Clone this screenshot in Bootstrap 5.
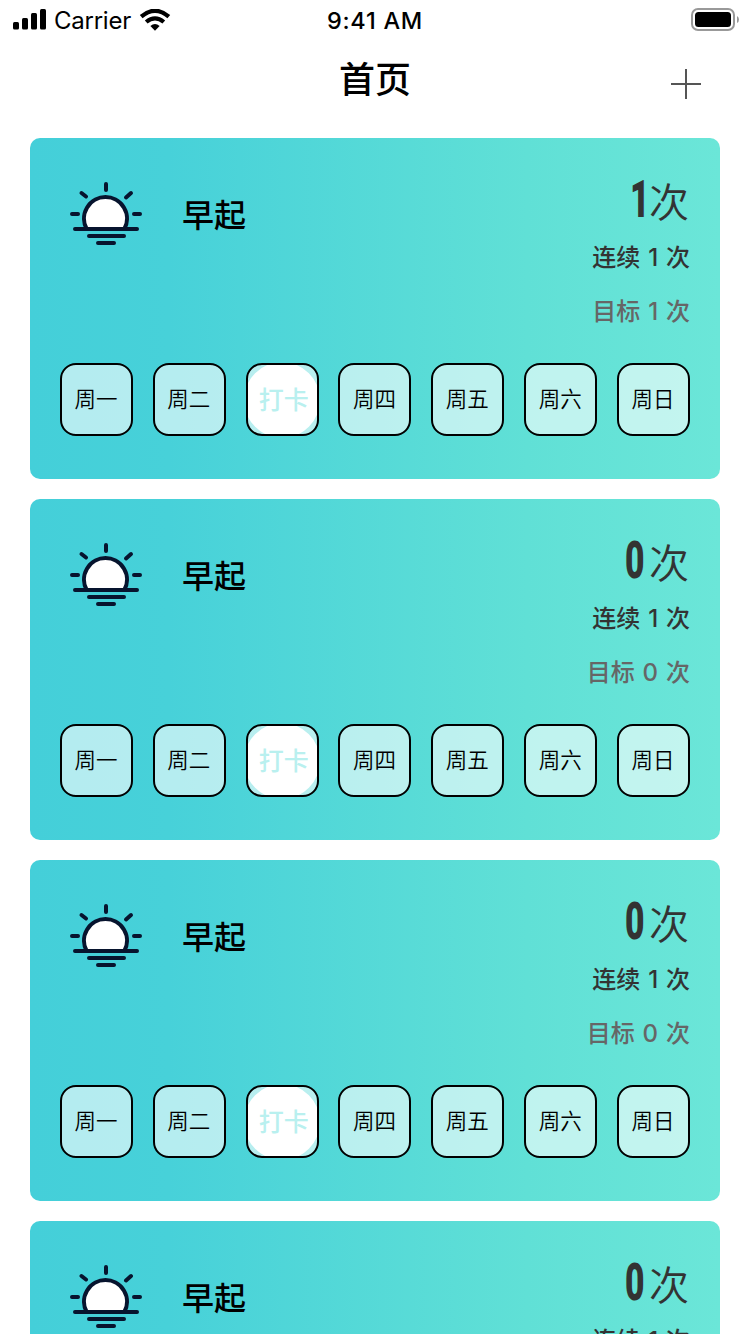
<!DOCTYPE html>
<html lang="zh-CN">
<head>
<meta charset="utf-8">
<meta name="viewport" content="width=device-width, initial-scale=1">
<title>首页</title>
<link href="https://cdn.jsdelivr.net/npm/bootstrap@5.3.0/dist/css/bootstrap.min.css" rel="stylesheet">
<style>
body{font-family:Inter,"Noto Sans CJK SC",sans-serif;color:#000;background:#fff;height:1334px;overflow:hidden}
.status-bar{height:40px;font-size:24px;line-height:42px}
.status-side{flex:1 1 0}
.signal{margin-left:13px}
.carrier{margin:2px 0 0 7px;font-size:24px;letter-spacing:-.25px}
.clock{font-weight:500;font-size:23.5px;letter-spacing:.75px}
.title-bar{height:98px}
.page-title{font-size:36px;font-weight:500;line-height:80px}
.add-btn{margin-top:29px;margin-right:49px}
#habits{gap:20px;padding:0 30px}
.habit{flex:none;height:341px;border-radius:10px;padding:36px 30px 43px;background:linear-gradient(90deg,#44cfd9 0%,#47d1d9 20%,#60e0d6 72%,#6be6d8 100%)}
.sun{margin:8px 0 0 10px}
.habit-name{font-size:32px;font-weight:500;line-height:48px;margin:18px 0 0 40px}
.stats{color:#333;font-size:24px;font-weight:500;line-height:54px;text-align:right;word-spacing:1.5px}
.total{height:57px;line-height:54px;font-size:40px;font-weight:350;padding-right:1px}
.digit{display:inline-block;font-family:Roboto,sans-serif;font-size:51px;font-weight:900;line-height:1;transform:scaleX(.66);transform-origin:100% 50%;margin-right:4px}
.digit-1{margin-right:-1px}
.goal{color:#666}
.day{width:73px;height:73px;border:2px solid #000;border-radius:16px;background:rgba(255,255,255,.6);font-size:21.5px;font-weight:350;padding-right:1px;overflow:hidden}
.punch{width:76px;height:76px;margin:-4px;flex:none;border-radius:50%;background:#fff;color:#b9f0ef;font-size:25px;font-weight:500;padding:3px 0 0 4px}
</style>
</head>
<body>
<svg class="d-none">
  <symbol id="sunrise" viewBox="0 0 72 64">
    <path d="M16.7 47A21.5 21.5 0 1 1 54.3 47Z" fill="#fff"/>
    <g fill="none" stroke="#07142e" stroke-width="4" stroke-linecap="round">
      <path d="M16.7 47A21.5 21.5 0 1 1 54.3 47"/>
      <path d="M5 47H67M19 54H54M28 61H44M2 32H8M64 32H70M36 2V8M11.5 11L16 14.5M56 15.5L61 11"/>
    </g>
  </symbol>
</svg>

<header>
  <div class="status-bar d-flex">
    <div class="status-side d-flex align-items-center">
      <svg class="signal" width="34" height="22" viewBox="0 0 34 22"><rect y="13" width="6" height="7.5" rx="1.5"/><rect x="9" y="9" width="6" height="11.5" rx="1.5"/><rect x="18" y="4" width="6" height="16.5" rx="1.5"/><rect x="27" y="0" width="6" height="20.5" rx="1.5"/></svg>
      <span class="carrier">Carrier</span>
      <svg class="ms-2" width="32" height="22" viewBox="0 0 32 22"><path d="M2.2 7.7Q16-4.2 29.8 7.7" fill="none" stroke="#000" stroke-width="4.2"/><path d="M7.2 13Q16 5.7 24.8 13" fill="none" stroke="#000" stroke-width="4.2"/><path d="M11.4 17Q16 13 20.6 17L16 21.8Z"/></svg>
    </div>
    <div class="clock">9:41 AM</div>
    <div class="status-side d-flex justify-content-end align-items-center">
      <svg width="59" height="24" viewBox="0 0 59 24"><rect x="1" y="1" width="42" height="21" rx="6" fill="none" stroke="#999" stroke-width="2"/><rect x="4" y="4" width="36" height="15" rx="3.5"/><path d="M46 8Q48 9 48 11.5T46 15Z" fill="#999"/></svg>
    </div>
  </div>
  <div class="title-bar d-flex">
    <div class="status-side"></div>
    <h1 class="page-title m-0">首页</h1>
    <div class="status-side d-flex justify-content-end align-items-start">
      <svg class="add-btn" width="30" height="30" viewBox="0 0 30 30"><path d="M0 15H30M15 0V30" stroke="#555" stroke-width="2"/></svg>
    </div>
  </div>
</header>
<main id="habits" class="d-flex flex-column"></main>

<script src="https://cdn.jsdelivr.net/npm/bootstrap@5.3.0/dist/js/bootstrap.bundle.min.js"></script>
<script>
const habits = [{n:1},{n:0},{n:0},{n:0}];
const days = ['周一','周二','打卡','周四','周五','周六','周日'];
const today = 2;
const dayBox = (d, i) => `<div class="day d-flex align-items-center justify-content-center">${
  i === today ? `<div class="punch d-flex align-items-center justify-content-center">${d}</div>` : d}</div>`;
document.getElementById('habits').innerHTML = habits.map(h => `
  <section class="habit d-flex flex-column justify-content-between">
    <div class="d-flex align-items-start">
      <svg class="sun" width="72" height="64"><use href="#sunrise"/></svg>
      <div class="habit-name">早起</div>
      <div class="stats ms-auto">
        <div class="total"><span class="digit digit-${h.n}">${h.n}</span>次</div>
        <div>连续 1 次</div>
        <div class="goal">目标 ${h.n} 次</div>
      </div>
    </div>
    <div class="d-flex justify-content-between">${days.map(dayBox).join('')}</div>
  </section>`).join('');
</script>
</body>
</html>
